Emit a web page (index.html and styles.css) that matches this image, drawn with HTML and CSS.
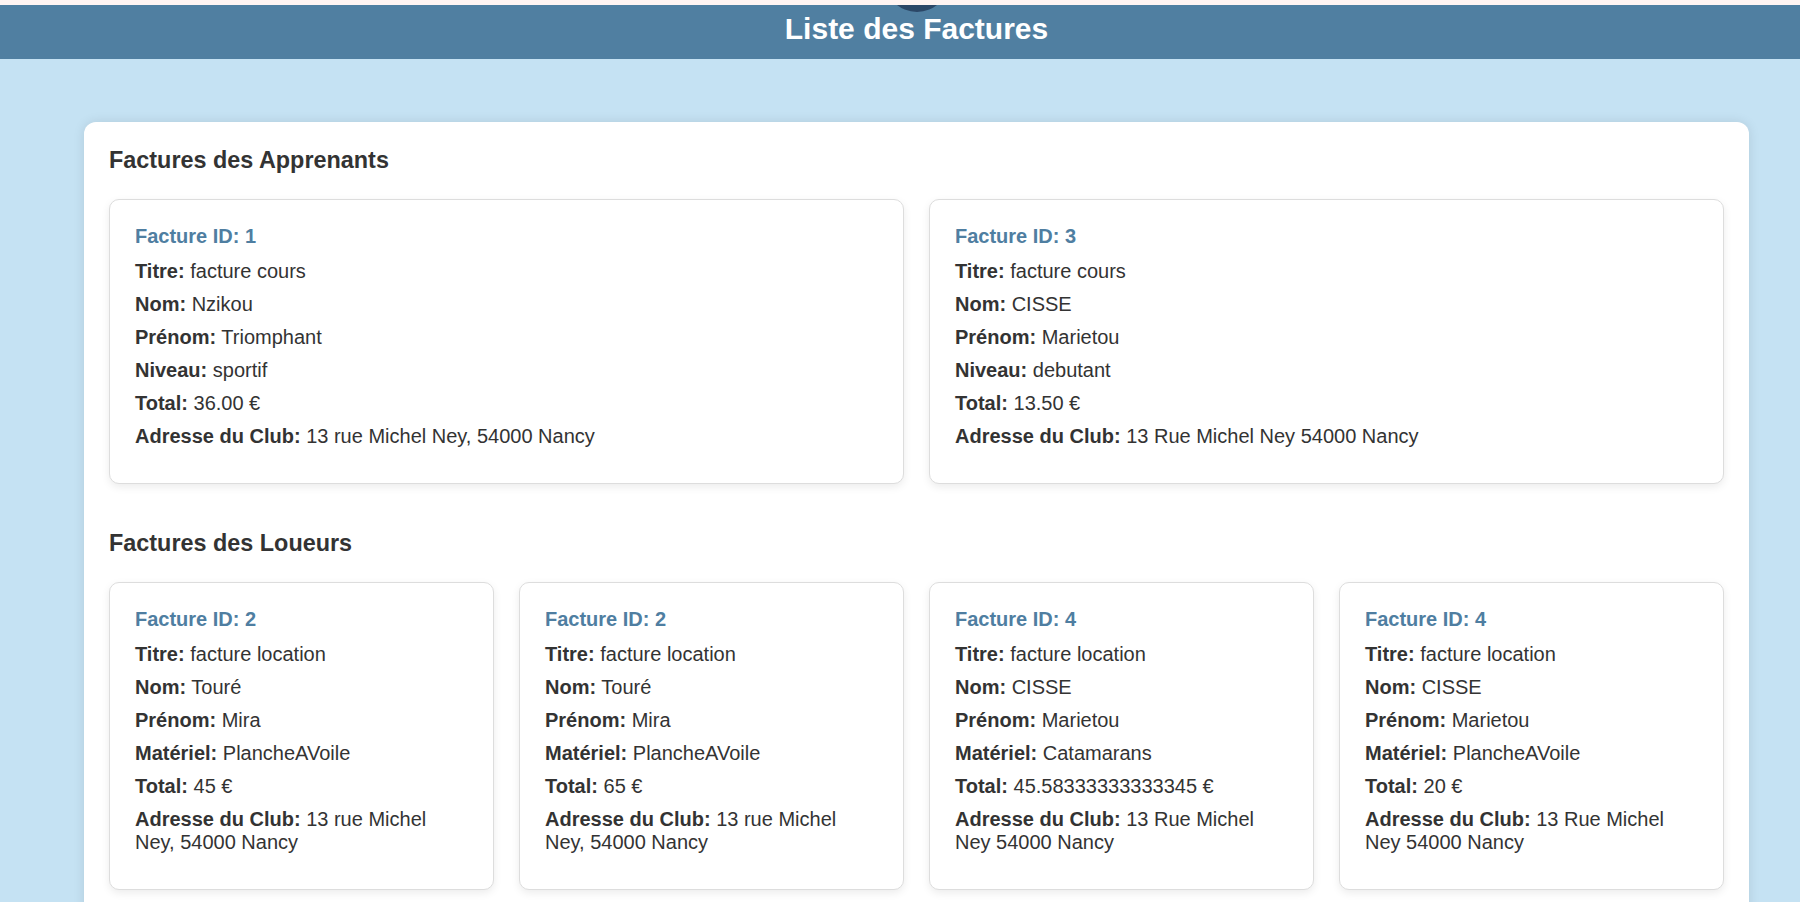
FILE: index.html
```html
<!DOCTYPE html>
<html lang="fr">
<head>
<meta charset="utf-8">
<title>Liste des Factures</title>
<link rel="stylesheet" href="styles.css">
</head>
<body>
<div class="top-strip"></div>
<header class="site-header">
  <span class="logo-dot"></span>
  <h1 class="site-title">Liste des Factures</h1>
</header>
<main class="container">
  <section class="section">
    <h3 class="section-title">Factures des Apprenants</h3>
    <div class="grid grid-2">
      <article class="card">
        <h4 class="card-title">Facture ID: 1</h4>
        <p><strong>Titre:</strong> facture cours</p>
        <p><strong>Nom:</strong> Nzikou</p>
        <p><strong>Prénom:</strong> Triomphant</p>
        <p><strong>Niveau:</strong> sportif</p>
        <p><strong>Total:</strong> 36.00 €</p>
        <p><strong>Adresse du Club:</strong> 13 rue Michel Ney, 54000 Nancy</p>
      </article>
      <article class="card">
        <h4 class="card-title">Facture ID: 3</h4>
        <p><strong>Titre:</strong> facture cours</p>
        <p><strong>Nom:</strong> CISSE</p>
        <p><strong>Prénom:</strong> Marietou</p>
        <p><strong>Niveau:</strong> debutant</p>
        <p><strong>Total:</strong> 13.50 €</p>
        <p><strong>Adresse du Club:</strong> 13 Rue Michel Ney 54000 Nancy</p>
      </article>
    </div>
  </section>
  <section class="section section-next">
    <h3 class="section-title">Factures des Loueurs</h3>
    <div class="grid grid-4">
      <article class="card">
        <h4 class="card-title">Facture ID: 2</h4>
        <p><strong>Titre:</strong> facture location</p>
        <p><strong>Nom:</strong> Touré</p>
        <p><strong>Prénom:</strong> Mira</p>
        <p><strong>Matériel:</strong> PlancheAVoile</p>
        <p><strong>Total:</strong> 45 €</p>
        <p><strong>Adresse du Club:</strong> 13 rue Michel<br>Ney, 54000 Nancy</p>
      </article>
      <article class="card">
        <h4 class="card-title">Facture ID: 2</h4>
        <p><strong>Titre:</strong> facture location</p>
        <p><strong>Nom:</strong> Touré</p>
        <p><strong>Prénom:</strong> Mira</p>
        <p><strong>Matériel:</strong> PlancheAVoile</p>
        <p><strong>Total:</strong> 65 €</p>
        <p><strong>Adresse du Club:</strong> 13 rue Michel<br>Ney, 54000 Nancy</p>
      </article>
      <article class="card">
        <h4 class="card-title">Facture ID: 4</h4>
        <p><strong>Titre:</strong> facture location</p>
        <p><strong>Nom:</strong> CISSE</p>
        <p><strong>Prénom:</strong> Marietou</p>
        <p><strong>Matériel:</strong> Catamarans</p>
        <p><strong>Total:</strong> 45.58333333333345 €</p>
        <p><strong>Adresse du Club:</strong> 13 Rue Michel<br>Ney 54000 Nancy</p>
      </article>
      <article class="card">
        <h4 class="card-title">Facture ID: 4</h4>
        <p><strong>Titre:</strong> facture location</p>
        <p><strong>Nom:</strong> CISSE</p>
        <p><strong>Prénom:</strong> Marietou</p>
        <p><strong>Matériel:</strong> PlancheAVoile</p>
        <p><strong>Total:</strong> 20 €</p>
        <p><strong>Adresse du Club:</strong> 13 Rue Michel<br>Ney 54000 Nancy</p>
      </article>
    </div>
  </section>
</main>
</body>
</html>
```
FILE: styles.css
```css
html, body {
  margin: 0;
  padding: 0;
}
body {
  background: #c5e2f3;
  font-family: "Liberation Sans", Arial, sans-serif;
  color: #333333;
}
.top-strip {
  height: 5px;
  background: #fff4f2;
  position: relative;
  z-index: 2;
}
.site-header {
  position: relative;
  height: 54px;
  background: #507fa1;
  overflow: hidden;
}
.logo-dot {
  position: absolute;
  left: 885px;
  top: -57px;
  width: 64px;
  height: 64px;
  border-radius: 50%;
  background: #2b4767;
}
.site-title {
  margin: 0;
  padding: 6px 0 13px 33px;
  text-align: center;
  font-size: 30px;
  line-height: 35px;
  font-weight: bold;
  color: #ffffff;
}
.container {
  width: 1665px;
  box-sizing: border-box;
  margin: 63px 0 40px 84px;
  padding: 25px 25px 40px;
  background: #ffffff;
  border-radius: 12px;
  box-shadow: 0 0 12px rgba(0, 0, 0, 0.1);
}
.section-title {
  margin: 0 0 25px;
  font-size: 23.4px;
  line-height: 27px;
  font-weight: bold;
  color: #333333;
}
.section-next {
  margin-top: 46px;
}
.grid {
  display: grid;
  gap: 25px;
}
.grid-2 {
  grid-template-columns: repeat(2, 1fr);
}
.grid-4 {
  grid-template-columns: repeat(4, 1fr);
}
.card {
  border: 1px solid #dddddd;
  border-radius: 10px;
  padding: 25px;
  background: #ffffff;
  box-shadow: 0 3px 8px rgba(0, 0, 0, 0.08);
}
.card-title {
  margin: 0 0 12px;
  font-size: 20px;
  line-height: 23px;
  font-weight: bold;
  color: #4f7ea1;
}
.card p {
  margin: 10px 0;
  font-size: 20px;
  line-height: 23px;
}
.card p strong {
  font-weight: bold;
}
```
